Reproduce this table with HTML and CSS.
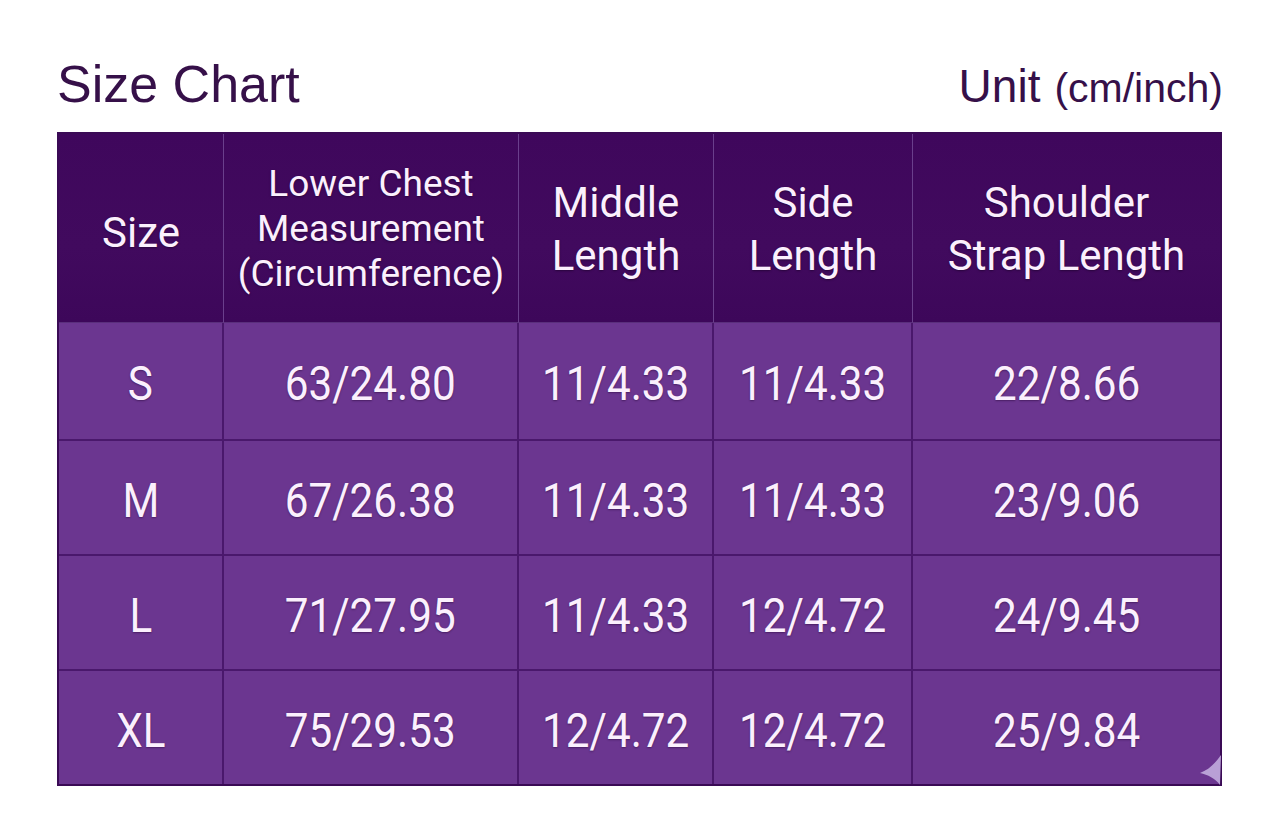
FILE: index.html
```html
<!DOCTYPE html>
<html lang="en">
<head>
<meta charset="utf-8">
<title>Size Chart</title>
<link rel="stylesheet" href="styles.css">
</head>
<body>
<main class="page">
  <header class="top">
    <h1 class="title">Size Chart</h1>
    <div class="unit"><span class="unit-main">Unit</span><span class="unit-sub">(cm/inch)</span></div>
  </header>
  <div class="chart">
    <div class="th th-size"><span>Size</span></div>
    <div class="th th-small"><span>Lower Chest<br>Measurement<br>(Circumference)</span></div>
    <div class="th"><span>Middle<br>Length</span></div>
    <div class="th"><span>Side<br>Length</span></div>
    <div class="th th-last"><span>Shoulder<br>Strap Length</span></div>

    <div class="td"><span class="v">S</span></div>
    <div class="td"><span class="v">63/24.80</span></div>
    <div class="td"><span class="v">11/4.33</span></div>
    <div class="td"><span class="v">11/4.33</span></div>
    <div class="td td-last"><span class="v">22/8.66</span></div>

    <div class="td"><span class="v">M</span></div>
    <div class="td"><span class="v">67/26.38</span></div>
    <div class="td"><span class="v">11/4.33</span></div>
    <div class="td"><span class="v">11/4.33</span></div>
    <div class="td td-last"><span class="v">23/9.06</span></div>

    <div class="td"><span class="v">L</span></div>
    <div class="td"><span class="v">71/27.95</span></div>
    <div class="td"><span class="v">11/4.33</span></div>
    <div class="td"><span class="v">12/4.72</span></div>
    <div class="td td-last"><span class="v">24/9.45</span></div>

    <div class="td td-bottom"><span class="v">XL</span></div>
    <div class="td td-bottom"><span class="v">75/29.53</span></div>
    <div class="td td-bottom"><span class="v">12/4.72</span></div>
    <div class="td td-bottom"><span class="v">12/4.72</span></div>
    <div class="td td-bottom td-last"><span class="v">25/9.84</span></div>

    <svg class="fold" width="24" height="32" viewBox="0 0 24 32" aria-hidden="true">
      <path d="M2 19 C 10 16, 17 10, 23 1 L 22 31 C 17 24, 10 21, 2 19 Z" fill="#b9a0d6"/>
    </svg>
  </div>
</main>
</body>
</html>
```

FILE: styles.css
```css
* { box-sizing: border-box; }

html, body {
  margin: 0;
  padding: 0;
  background: #ffffff;
}

.page {
  width: 1280px;
  height: 832px;
  padding: 58px 58px 0 57px;
}

.top {
  display: flex;
  justify-content: space-between;
  align-items: baseline;
  margin-bottom: 19px;
}

.title {
  margin: 0;
  font-family: "Liberation Sans", Arial, sans-serif;
  font-weight: 400;
  font-size: 52px;
  line-height: 52px;
  color: #361049;
}

.unit {
  font-family: "Liberation Sans", Arial, sans-serif;
  color: #361049;
  margin-right: -1px;
}

.unit-main { font-size: 46px; }
.unit-sub { font-size: 41px; margin-left: 14px; }

.chart {
  position: relative;
  display: grid;
  grid-template-columns: 165px 295px 195px 199px 1fr;
  grid-template-rows: 189px 118px 115px 115px 1fr;
  width: 1165px;
  height: 654px;
  border: 2px solid #3a0a55;
  font-family: Roboto, "Liberation Sans", Arial, sans-serif;
  color: #fbf0fd;
}

.th {
  display: flex;
  align-items: center;
  justify-content: center;
  text-align: center;
  background: linear-gradient(180deg, #3f075c 0%, #410a5e 60%, #3d075a 100%);
  border-right: 1px solid #6a3f8c;
  border-bottom: 1px solid #5a2f7c;
  font-size: 42px;
  line-height: 53px;
  padding-top: 2px;
  text-shadow: 0 1px 2px rgba(20, 0, 30, 0.5);
}

.th-size { padding-top: 8px; }

.th-small {
  font-size: 37px;
  line-height: 45px;
  padding-top: 0;
}

.th-last { border-right: none; }

.td {
  display: flex;
  align-items: center;
  justify-content: center;
  background: #6b3690;
  border-right: 2px solid #4a186c;
  border-bottom: 2px solid #4a186c;
  padding-top: 6px;
  text-shadow: 0 1px 2px rgba(30, 0, 45, 0.45);
}

.td-last { border-right: none; }
.td-bottom { border-bottom: none; }

.v {
  display: inline-block;
  font-size: 48px;
  line-height: 1;
  transform: scaleX(0.88);
}

.fold {
  position: absolute;
  right: -2px;
  bottom: -2px;
}
```
